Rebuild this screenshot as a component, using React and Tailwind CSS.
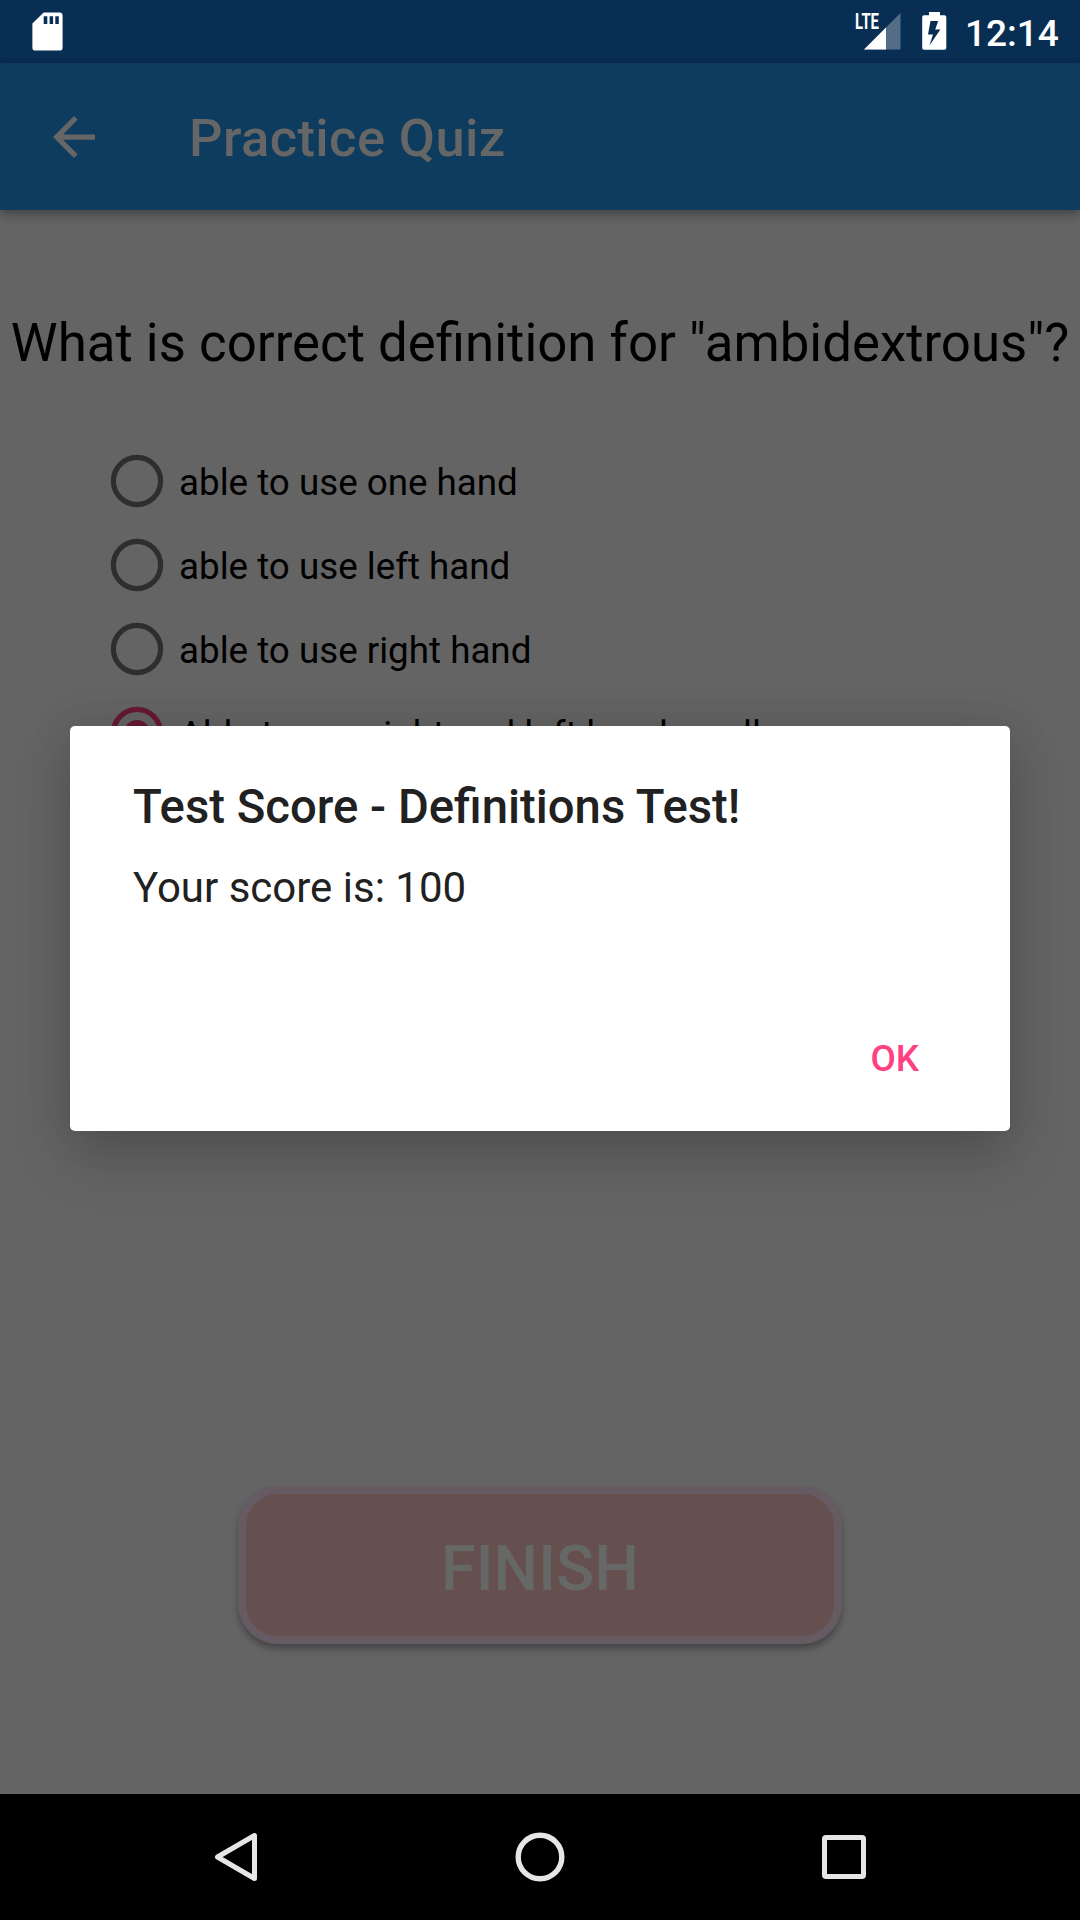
const OPTIONS = [
  { label: 'able to use one hand' },
  { label: 'able to use left hand' },
  { label: 'able to use right hand' },
  { label: 'Able to use right and left hands well', checked: true },
];

function StatusBar() {
  return (
    <div className="flex h-[63px] items-start bg-[#092e53] text-white">
      <svg className="ml-[32px] mt-[12px] h-[39px] w-[31px]" viewBox="0 0 31 39">
        <path
          fill="#fff"
          fillRule="evenodd"
          d="M12 .6H27.400a3.200 3.200 0 0 1 3.200 3.200V35.400a3.200 3.200 0 0 1-3.200 3.200H3.600a3.200 3.200 0 0 1-3.200-3.200V11.600L10.600 1.400Q11.300 .6 12 .6ZM11.700 4.300v7.700h3.600V4.300ZM17.600 4.300v7.700h3.500V4.300ZM23.300 4.300v7.700h3.500V4.300Z"
        />
      </svg>
      <svg className="ml-auto h-[63px] w-[48px]" viewBox="0 0 48 63">
        <path fill="#fff" fillOpacity=".3" d="M45.500 13V49.500H9Z" />
        <path fill="#fff" d="M31 27.500V49.500H9Z" />
        <text
          x="0"
          y="29.200"
          textLength="24"
          lengthAdjust="spacingAndGlyphs"
          className="fill-white font-['Roboto',sans-serif] text-[21.500px] font-bold"
        >
          LTE
        </text>
      </svg>
      <svg className="ml-[19px] mt-[12px] h-[38px] w-[25px]" viewBox="0 0 25 38">
        <path
          fill="#fff"
          fillRule="evenodd"
          d="M7 0H18V3.200H22.500Q24.300 3.200 24.300 5V36Q24.300 37.800 22.500 37.800H2Q.2 37.800 .2 36V5Q.2 3.200 2 3.200H7ZM8.500 9L6 22.500H11L7.400 33.500L18.400 17.500H13.200L16.200 9Z"
        />
      </svg>
      <span className="ml-[18px] mt-[12px] w-[115px] text-[37px] font-medium leading-[43px]">12:14</span>
    </div>
  );
}

function AppBar() {
  return (
    <header className="relative z-10 flex h-[147px] items-center bg-[#0d3c5f] text-[#666666] shadow-[0_4px_10px_rgba(0,0,0,0.35)]">
      <svg className="ml-[53px] h-[42px] w-[42px]" viewBox="4 4 16 16">
        <path fill="#666" d="M20 11H7.830l5.590-5.590L12 4l-8 8 8 8 1.410-1.410L7.830 13H20v-2z" />
      </svg>
      <h1 className="ml-[94px] mt-[3px] text-[52.500px] font-medium leading-[62px] tracking-[0.4px]">Practice Quiz</h1>
    </header>
  );
}

function Option({ label, checked }) {
  return (
    <label className="flex h-[84px] items-center">
      <svg className="h-[54px] w-[54px]" viewBox="0 0 54 54">
        <circle cx="27" cy="27" r="23.600" fill="none" strokeWidth="5.200" stroke={checked ? '#661a35' : '#2e2e2e'} />
        {checked && <circle cx="27" cy="27" r="13.100" fill="#661a35" />}
      </svg>
      <span className="ml-[15px] mt-[2px] text-[36.750px] leading-[43px] text-black">{label}</span>
    </label>
  );
}

function ScoreDialog() {
  return (
    <div className="absolute left-[70px] top-[726px] z-20 flex h-[405px] w-[940px] flex-col rounded-[5px] bg-white px-[63px] text-[#212121] shadow-[0_28px_56px_rgba(0,0,0,0.17),0_0_46px_rgba(0,0,0,0.1)]">
      <h2 className="mt-[53px] whitespace-nowrap text-[47.250px] font-medium leading-[56px]">Test Score - Definitions Test!</h2>
      <p className="mt-[28px] text-[42px] leading-[49px]">Your score is: 100</p>
      <div className="mt-auto flex justify-end pb-[51px] pr-[28px]">
        <button className="text-[36.750px] font-medium leading-[43px] text-[#ff4081]">OK</button>
      </div>
    </div>
  );
}

function NavigationBar() {
  return (
    <nav className="flex h-[126px] items-center justify-between bg-black pl-[211px] pr-[210px]">
      <svg className="h-[52px] w-[52px]" viewBox="0 0 52 52" fill="none" stroke="#e6e6e6" strokeWidth="5" strokeLinejoin="round">
        <path d="M43.500 4.500V47.500L6.500 26Z" />
      </svg>
      <svg className="h-[52px] w-[52px]" viewBox="0 0 52 52" fill="none" stroke="#e6e6e6" strokeWidth="5.400">
        <circle cx="25" cy="26" r="21.800" />
      </svg>
      <svg className="h-[52px] w-[52px]" viewBox="0 0 52 52" fill="none" stroke="#e6e6e6" strokeWidth="5">
        <rect x="6.500" y="6.500" width="39" height="39" rx="1.500" />
      </svg>
    </nav>
  );
}

export default function App() {
  return (
    <div className="relative flex h-[1920px] w-[1080px] flex-col overflow-hidden bg-[#646464] font-['Roboto',sans-serif]">
      <StatusBar />
      <AppBar />
      <main className="flex flex-1 flex-col">
        <p className="mt-[102px] whitespace-nowrap text-center text-[52.800px] leading-[63px] text-black">
          What is correct definition for "ambidextrous"?
        </p>
        <div className="ml-[110px] mt-[64px] flex flex-col">
          {OPTIONS.map((option) => (
            <Option key={option.label} {...option} />
          ))}
        </div>
        <button className="mx-auto mb-[150px] mt-auto h-[158px] w-[604px] rounded-[40px] border-[8px] border-[#665a63] bg-[#654f4f] pt-[7px] text-[63px] font-medium leading-none text-[#666866] shadow-[0_5px_6px_rgba(0,0,0,0.3)]">
          FINISH
        </button>
      </main>
      <NavigationBar />
      <ScoreDialog />
    </div>
  );
}
